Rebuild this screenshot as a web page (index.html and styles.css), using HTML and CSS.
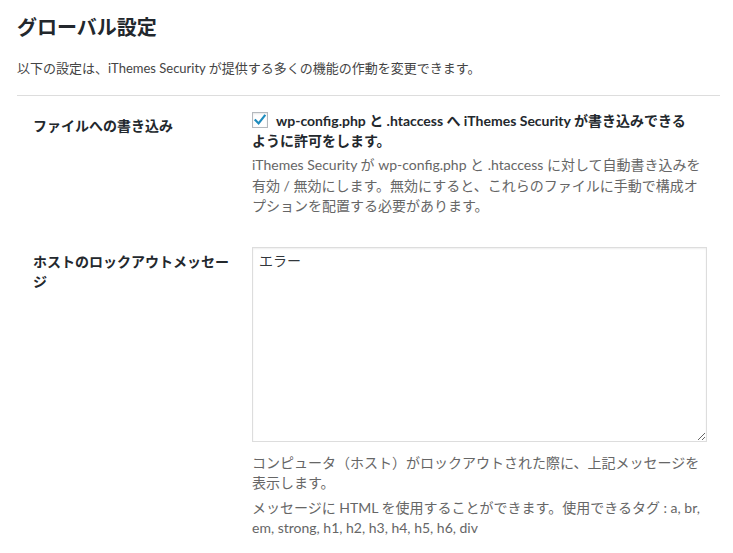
FILE: index.html
```html
<!DOCTYPE html>
<html lang="ja">
<head>
<meta charset="utf-8">
<title>グローバル設定</title>
<link rel="stylesheet" href="styles.css">
</head>
<body>
<div class="wrap">
  <h2 class="title">グローバル設定</h2>
  <p class="intro">以下の設定は、iThemes Security が提供する多くの機能の作動を変更できます。</p>
  <hr class="sep">
  <div class="form">
    <div class="row">
      <div class="label">ファイルへの書き込み</div>
      <div class="field">
        <label class="check-label"><span class="checkbox"><svg viewBox="0 0 16 16" width="16" height="16"><path d="M3.5 8.2 L6.6 11.4 L12.6 3.8" fill="none" stroke="#1e8cbe" stroke-width="2.2" stroke-linecap="square"/></svg></span>wp-config.php と .htaccess へ iThemes Security が書き込みできる<br>ように許可をします。</label>
        <p class="desc">iThemes Security が wp-config.php と .htaccess に対して自動書き込みを<br>有効 / 無効にします。無効にすると、これらのファイルに手動で構成オ<br>プションを配置する必要があります。</p>
      </div>
    </div>
    <div class="row">
      <div class="label">ホストのロックアウトメッセー<br>ジ</div>
      <div class="field">
        <textarea class="message">エラー</textarea>
        <p class="desc desc-after">コンピュータ（ホスト）がロックアウトされた際に、上記メッセージを<br>表示します。</p>
        <p class="desc desc-next">メッセージに HTML を使用することができます。使用できるタグ : a, br,<br>em, strong, h1, h2, h3, h4, h5, h6, div</p>
      </div>
    </div>
  </div>
</div>
</body>
</html>
```
FILE: styles.css
```css
html, body {
  margin: 0;
  padding: 0;
  background: #fff;
}
body {
  font-family: Lato, "Noto Sans CJK JP", sans-serif;
  color: #23282d;
  font-size: 14px;
}
.wrap {
  padding: 0 13px 0 17px;
}
.title {
  margin: 0;
  padding-top: 14px;
  font-size: 20px;
  line-height: 26px;
  font-weight: 700;
  color: #23282d;
}
.intro {
  margin: 18px 0 0;
  font-size: 13px;
  line-height: 20px;
  color: #444;
}
.sep {
  margin: 17px 0 0;
  border: 0;
  border-top: 1px solid #ddd;
  height: 0;
}
.row {
  display: grid;
  grid-template-columns: 219px 462px;
  padding-left: 16px;
}
.label {
  padding: 20px 10px 20px 0;
  font-weight: 700;
  font-size: 14px;
  line-height: 20px;
  color: #23282d;
}
.field {
  padding: 15px 0;
}
.check-label {
  display: block;
  font-weight: 700;
  font-size: 14px;
  line-height: 20px;
  color: #23282d;
}
.checkbox {
  display: inline-block;
  box-sizing: border-box;
  width: 16px;
  height: 16px;
  border: 1px solid #b4b9be;
  box-shadow: inset 0 1px 2px rgba(0,0,0,.1);
  vertical-align: -2px;
  margin-right: 8px;
  position: relative;
}
.checkbox svg {
  position: absolute;
  left: -1px;
  top: -1px;
}
.desc {
  margin: 4px 0 0;
  font-size: 14px;
  line-height: 20.5px;
  color: #666;
}
.message {
  display: block;
  box-sizing: border-box;
  width: 455px;
  height: 195px;
  margin: 0;
  padding: 3px 6px;
  border: 1px solid #ddd;
  box-shadow: inset 0 1px 2px rgba(0,0,0,.07);
  font-family: Lato, "Noto Sans CJK JP", sans-serif;
  font-size: 14px;
  line-height: 20px;
  color: #32373c;
  background: #fff;
  resize: both;
  outline: none;
}
.desc-after {
  margin-top: 11px;
}
.desc-next {
  margin-top: 4px;
}
```
